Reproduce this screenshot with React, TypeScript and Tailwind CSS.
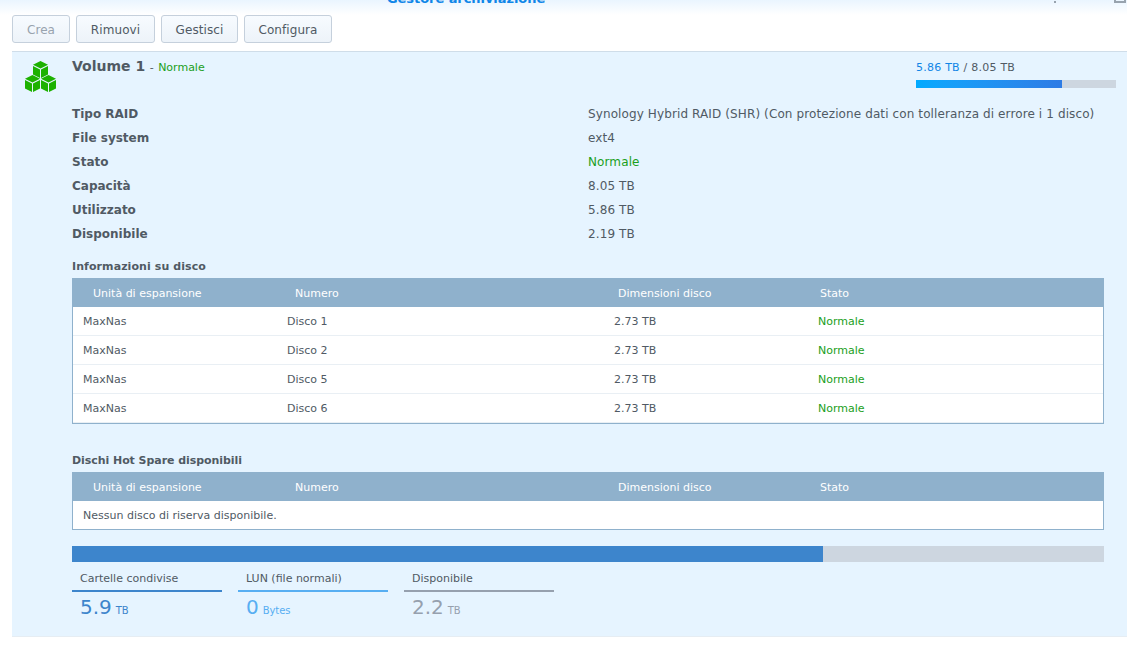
import clsx from "clsx";

const details = [
  { label: "Tipo RAID", value: "Synology Hybrid RAID (SHR) (Con protezione dati con tolleranza di errore i 1 disco)" },
  { label: "File system", value: "ext4" },
  { label: "Stato", value: "Normale", ok: true },
  { label: "Capacità", value: "8.05 TB" },
  { label: "Utilizzato", value: "5.86 TB" },
  { label: "Disponibile", value: "2.19 TB" },
];

const disks = ["Disco 1", "Disco 2", "Disco 5", "Disco 6"];

const buttons = [
  { label: "Crea", className: "w-[58px] text-[#98a3ae]" },
  { label: "Rimuovi", className: "w-[79px] text-[#505a64]" },
  { label: "Gestisci", className: "w-[77px] text-[#505a64]" },
  { label: "Configura", className: "w-[88px] text-[#505a64]" },
];

const usage = [
  { label: "Cartelle condivise", value: "5.9", unit: "TB", className: "border-[#3d85cc] text-[#3d85cc]" },
  { label: "LUN (file normali)", value: "0", unit: "Bytes", className: "border-[#57aef2] text-[#57aef2]" },
  { label: "Disponibile", value: "2.2", unit: "TB", className: "border-[#96a0ae] text-[#96a0ae]" },
];

const Cube = ({ x, y }: { x: number; y: number }) => (
  <g transform={`translate(${x} ${y})`}>
    <path d="M7.5 0 15 3.8 7.5 7.6 0 3.8Z" />
    <path d="M0 5 7 8.5V17L0 13.5Z" />
    <path d="M15 5 8 8.5V17L15 13.5Z" />
  </g>
);

const VolumeIcon = () => (
  <svg width="32" height="32" viewBox="0 0 32 32" fill="#1db100">
    <Cube x={8} y={0} />
    <Cube x={0} y={14} />
    <Cube x={16} y={14} />
  </svg>
);

const TableHead = () => (
  <div className="flex h-[29px] items-center bg-[#8fb1cc] pt-[3px] text-white">
    <span className="w-[202px] pl-[21px]">Unità di espansione</span>
    <span className="w-[323px] pl-[21px]">Numero</span>
    <span className="w-[202px] pl-[21px]">Dimensioni disco</span>
    <span className="pl-[21px]">Stato</span>
  </div>
);

const App = () => {
  return (
    <div className="flex h-[654px] w-[1127px] flex-col overflow-hidden bg-white font-['Verdana','DejaVu_Sans',sans-serif] text-[#505a64]">
      <div className="relative h-[15px] shrink-0 bg-linear-to-b from-[#eaf5ff] to-white">
        <p className="absolute -top-[9px] left-[387px] text-[13px] leading-4 font-bold tracking-[-0.06px] whitespace-nowrap text-[#0f86e8]">
          Gestore archiviazione
        </p>
        <span className="absolute top-px left-[1054px] h-[2px] w-[2px] bg-[#98a3ae]" />
        <span className="absolute -top-[9px] left-[1114px] h-3 w-3 border-2 border-[#98a3ae]" />
      </div>

      <div className="flex h-9 shrink-0 gap-1.5 pl-3">
        {buttons.map((button) => (
          <button
            key={button.label}
            className={clsx(
              "h-7 rounded-[3px] border border-[#c5d0dc] bg-linear-to-b from-[#f7fbff] to-[#edf3f9] pt-0.5 text-center text-[12px] tracking-[0.08px]",
              button.className
            )}
          >
            {button.label}
          </button>
        ))}
      </div>

      <main className="ml-3 flex h-[586px] shrink-0 flex-col border-t border-b border-t-[#cfdde9] border-b-[#e6edf3] bg-[#e6f4ff]">
        <header className="flex h-[50px] shrink-0">
          <div className="w-[60px] pt-[9px] pl-[13px]">
            <VolumeIcon />
          </div>
          <h1 className="flex-1 pt-1 text-[11px] leading-5">
            <span className="text-[14px] font-bold">Volume 1</span>
            <span className="mr-px ml-px"> - </span>
            <span className="text-[#1ba01b]">Normale</span>
          </h1>
          <div className="mr-[11px] w-[200px] pt-2 text-[11px] leading-4">
            <p className="tracking-[0.23px]">
              <span className="text-[#1185e6]">5.86 TB</span> / 8.05 TB
            </p>
            <div className="mt-1 h-2 bg-[#cdd6e0]">
              <div className="h-full w-[146px] bg-linear-to-r from-[#00aaff] to-[#2d7be5]" />
            </div>
          </div>
        </header>

        <dl className="ml-[60px] text-[12px] leading-6">
          {details.map((row) => (
            <div key={row.label} className="flex h-6">
              <dt className="w-[516px] font-bold">{row.label}</dt>
              <dd className={clsx("tracking-[0.11px] whitespace-nowrap", row.ok && "text-[#1ba01b]")}>
                {row.value}
              </dd>
            </div>
          ))}
        </dl>

        <section className="mt-[13px] ml-[60px] w-[1032px] text-[11px]">
          <h2 className="h-[19px] leading-4 font-bold tracking-[0.08px]">Informazioni su disco</h2>
          <TableHead />
          <div className="border border-t-0 border-[#8fb1cc] bg-white">
            {disks.map((disk) => (
              <div key={disk} className="flex h-[29px] items-center border-b border-[#e9eff4] pt-0.5">
                <span className="w-[204px] pl-[10px]">MaxNas</span>
                <span className="w-[327px] pl-[10px]">{disk}</span>
                <span className="w-[204px] pl-[10px]">2.73 TB</span>
                <span className="pl-[10px] text-[#1ba01b]">Normale</span>
              </div>
            ))}
          </div>
        </section>

        <section className="mt-[29px] ml-[60px] w-[1032px] text-[11px]">
          <h2 className="h-[19px] leading-4 font-bold tracking-[-0.06px]">Dischi Hot Spare disponibili</h2>
          <TableHead />
          <div className="flex h-[29px] items-center border border-t-0 border-[#8fb1cc] bg-white pt-0.5 pl-[10px]">
            Nessun disco di riserva disponibile.
          </div>
        </section>

        <div className="mt-4 ml-[60px] h-4 w-[1032px] shrink-0 bg-[#cdd6e0]">
          <div className="h-full w-[751px] bg-[#3d85cc]" />
        </div>
        <div className="mt-[9px] ml-[60px] flex gap-4">
          {usage.map((item) => (
            <div key={item.label} className={clsx("w-[150px]", item.className)}>
              <p className="h-[21px] border-b-2 border-inherit pl-2 text-[11px] leading-4">
                <span className="text-[#505a64]">{item.label}</span>
              </p>
              <p className="pl-2 text-[20px] leading-[30px]">
                {item.value}
                <span className="ml-1 text-[10px] tracking-[-0.1px]">{item.unit}</span>
              </p>
            </div>
          ))}
        </div>
      </main>
    </div>
  );
};

export default App;
